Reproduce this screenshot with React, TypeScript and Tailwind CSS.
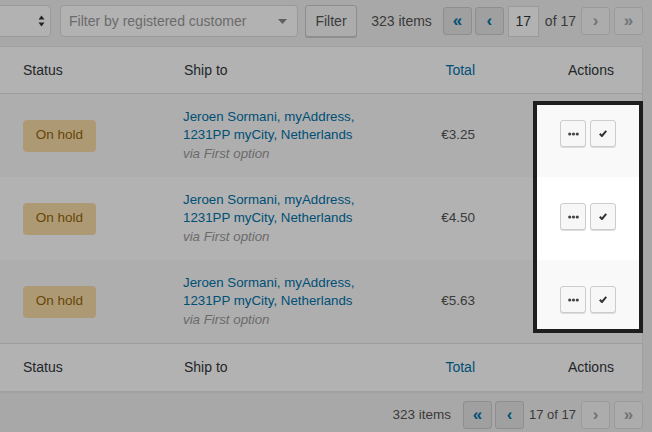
// Orders list with the Actions column spotlighted (dimmed page, boxed cells).

const ROWS = [
  { total: '€3.25', striped: true },
  { total: '€4.50', striped: false },
  { total: '€5.63', striped: true },
];

function Dots() {
  return (
    <svg width="11" height="4" viewBox="0 0 11 4" aria-hidden="true">
      <circle cx="1.7" cy="2" r="1.6" fill="#444" />
      <circle cx="5.5" cy="2" r="1.6" fill="#444" />
      <circle cx="9.3" cy="2" r="1.6" fill="#444" />
    </svg>
  );
}

function Check() {
  return (
    <svg width="8" height="7" viewBox="0 0 8 7" aria-hidden="true">
      <path d="M0.8 3.8 L2.9 6 L7.3 0.8" fill="none" stroke="#333" strokeWidth="2" strokeLinejoin="round" />
    </svg>
  );
}

function PageBtn({ glyph, active }: { glyph: string; active: boolean }) {
  return (
    <span
      className={`flex h-[28px] w-[29px] items-center justify-center rounded-[3px] border text-[17px] font-semibold leading-none ${
        active ? 'border-[#cccccc] bg-[#e5e5e5] text-[#0073aa]' : 'border-[#dddddd] bg-[#f7f7f7] text-[#a0a5aa]'
      }`}
    >
      <span className="-mt-[2px]">{glyph}</span>
    </span>
  );
}

function HeaderRow({ top }: { top: boolean }) {
  return (
    <div
      className={`grid grid-cols-[203px_230px_120px_1fr] items-center text-[14px] text-[#32373c] ${
        top ? 'h-[47px] border-b border-[#e1e1e1]' : 'h-[48px] border-t border-[#e1e1e1]'
      }`}
    >
      <span className="pl-[42px]">Status</span>
      <span>Ship to</span>
      <span className="pr-[59px] text-right text-[#0073aa]">Total</span>
      <span className="pl-[6px] text-center">Actions</span>
    </div>
  );
}

export default function App() {
  return (
    <div
      className="relative h-[432px] w-[652px] overflow-hidden bg-[#f1f1f1]"
      style={{ fontFamily: '"Liberation Sans", Arial, sans-serif' }}
    >
      <div className="-ml-[20px] w-[663px]">
        {/* Filters + top pagination */}
        <div className="flex h-[42px] items-center">
          <div className="flex h-[32px] w-[71px] items-center justify-end rounded-[4px] border border-[#dddddd] bg-white pr-[5px]">
            <svg width="7" height="12" viewBox="0 0 7 12" aria-hidden="true">
              <path d="M3.5 0.5 L6.5 4.5 L0.5 4.5 Z" fill="#333" />
              <path d="M3.5 11.5 L6.5 7.5 L0.5 7.5 Z" fill="#333" />
            </svg>
          </div>
          <div className="ml-[9px] flex h-[32px] w-[238px] items-center justify-between rounded-[4px] border border-[#dddddd] bg-white pl-[8px] pr-[10px] text-[14px] text-[#999999]">
            <span>Filter by registered customer</span>
            <svg width="9" height="5" viewBox="0 0 9 5" aria-hidden="true">
              <path d="M0 0 L9 0 L4.5 5 Z" fill="#888" />
            </svg>
          </div>
          <div className="ml-[7px] flex h-[32px] w-[52px] items-center justify-center rounded-[3px] border border-[#cccccc] bg-[#f7f7f7] text-[14px] text-[#555555] shadow-[0_1px_0_#cccccc]">
            Filter
          </div>

          <div className="ml-auto flex items-center text-[14px] text-[#555555]">
            <span className="mr-[11px]">323 items</span>
            <PageBtn glyph="«" active />
            <span className="ml-[3px]">
              <PageBtn glyph="‹" active />
            </span>
            <span className="ml-[4px] flex h-[31px] w-[31px] items-center justify-center border border-[#dddddd] bg-white text-[#32373c]">
              17
            </span>
            <span className="ml-[6px] mr-[5px]">of 17</span>
            <PageBtn glyph="›" active={false} />
            <span className="ml-[4px]">
              <PageBtn glyph="»" active={false} />
            </span>
          </div>
        </div>

        {/* Orders table */}
        <div className="mt-[4px] border border-[#e5e5e5] bg-white shadow-[0_1px_1px_rgba(0,0,0,0.04)]">
          <HeaderRow top />
          {ROWS.map((row, i) => (
            <div
              key={i}
              className={`grid h-[83px] grid-cols-[203px_230px_120px_1fr] items-center ${
                row.striped ? 'bg-[#f9f9f9]' : 'bg-white'
              }`}
            >
              <div className="pl-[42px]">
                <span className="flex h-[32px] w-[73px] items-center justify-center rounded-[4px] bg-[#f8dda7] text-[13.5px] text-[#94660c]">
                  On hold
                </span>
              </div>
              <div className="-ml-[1px] text-[13.3px] leading-[18.5px]">
                <div className="text-[#0073aa]">Jeroen Sormani, myAddress,</div>
                <div className="text-[#0073aa]">1231PP myCity, Netherlands</div>
                <div className="italic text-[#999999]">via First option</div>
              </div>
              <div className="pr-[59px] text-right text-[13.5px] text-[#555555]">{row.total}</div>
              <div className="flex justify-center gap-[4px] pb-[4px]">
                <span className="flex h-[27px] w-[26px] items-center justify-center rounded-[3px] border border-[#cccccc] bg-[#f7f7f7] shadow-[0_1px_0_#dddddd]">
                  <Dots />
                </span>
                <span className="flex h-[27px] w-[26px] items-center justify-center rounded-[3px] border border-[#cccccc] bg-[#f7f7f7] shadow-[0_1px_0_#dddddd]">
                  <Check />
                </span>
              </div>
            </div>
          ))}
          <HeaderRow top={false} />
        </div>

        {/* Bottom pagination */}
        <div className="mt-[9px] flex items-center justify-end text-[14px] text-[#555555]">
          <span className="mr-[12px] text-[13.5px]">323 items</span>
          <PageBtn glyph="«" active />
          <span className="ml-[3px]">
            <PageBtn glyph="‹" active />
          </span>
          <span className="ml-[5px] mr-[5px] text-[13px]">17 of 17</span>
          <PageBtn glyph="›" active={false} />
          <span className="ml-[4px]">
            <PageBtn glyph="»" active={false} />
          </span>
        </div>
      </div>

      {/* Spotlight over the Actions column */}
      <div className="absolute left-[533px] top-[101px] h-[232px] w-[110px] border-4 border-[#1e1e1e] shadow-[0_0_0_9999px_rgba(0,0,0,0.3)]" />
    </div>
  );
}
